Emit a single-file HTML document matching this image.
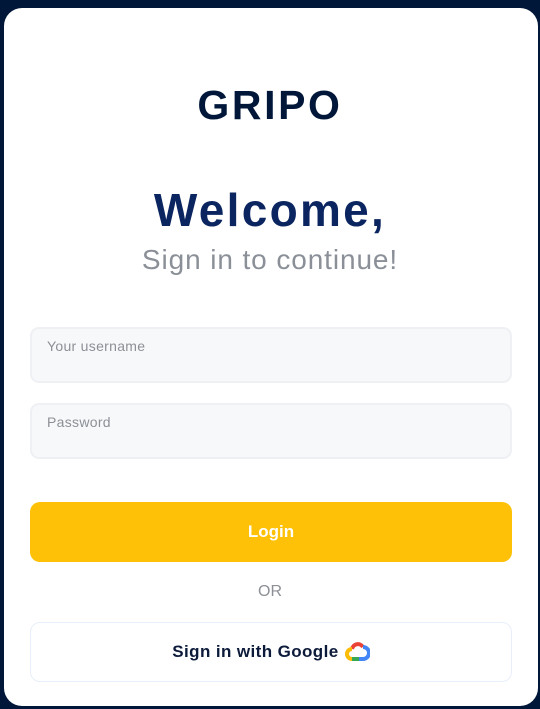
<!DOCTYPE html>
<html><head><style>
*{margin:0;padding:0;box-sizing:border-box}
body{width:540px;height:709px;background:#001739;font-family:"Liberation Sans",sans-serif;position:relative;overflow:hidden}
.card{position:absolute;left:4px;top:8px;width:534px;height:698px;background:#fff;border-radius:18px}
.abs{position:absolute;left:0;width:540px;text-align:center}
.logo{top:82px;font-size:41px;font-weight:900;color:#001739;letter-spacing:2.6px}
.wel{top:183px;font-size:46px;font-weight:bold;color:#0b2560;letter-spacing:2.3px}
.sub{top:244px;font-size:28px;color:#8b9098;letter-spacing:0.9px}
.inp{position:absolute;left:30px;width:482px;height:56px;background:#f7f8fa;border:2px solid #eef0f3;border-radius:9px;font-size:14px;color:#8c9096;padding:9px 0 0 15px;letter-spacing:0.3px}
.btn{position:absolute;left:30px;width:482px;height:60px;border-radius:10px;text-align:center;line-height:60px;font-size:17px;font-weight:bold}
</style></head><body>
<div class="card"></div>
<div class="abs logo">GRIPO</div>
<div class="abs wel">Welcome,</div>
<div class="abs sub">Sign in to continue!</div>
<div class="inp" style="top:327px">Your username</div>
<div class="inp" style="top:403px">Password</div>
<div class="btn" style="top:502px;background:#fec107;color:#fff">Login</div>
<div class="abs" style="top:583px;font-size:16px;color:#8c9096">OR</div>
<div class="btn" style="top:622px;border:1px solid #e8eefa;color:#0d1b3a;line-height:58px;background:#fff;letter-spacing:0.4px">Sign in with Google
<svg width="26" height="24" viewBox="0 0 26 24" style="vertical-align:-6px"><path d="M8 10 A6 6 0 0 1 19 8" stroke="#ea4335" stroke-width="4" fill="none"/><path d="M19 8 A5 5 0 0 1 19 20 H15" stroke="#4285f4" stroke-width="4" fill="none"/><path d="M15 20 H8" stroke="#34a853" stroke-width="4" fill="none"/><path d="M8 20 A5 5 0 0 1 8 10" stroke="#fbbc05" stroke-width="4" fill="none"/></svg></div>
</body></html>
